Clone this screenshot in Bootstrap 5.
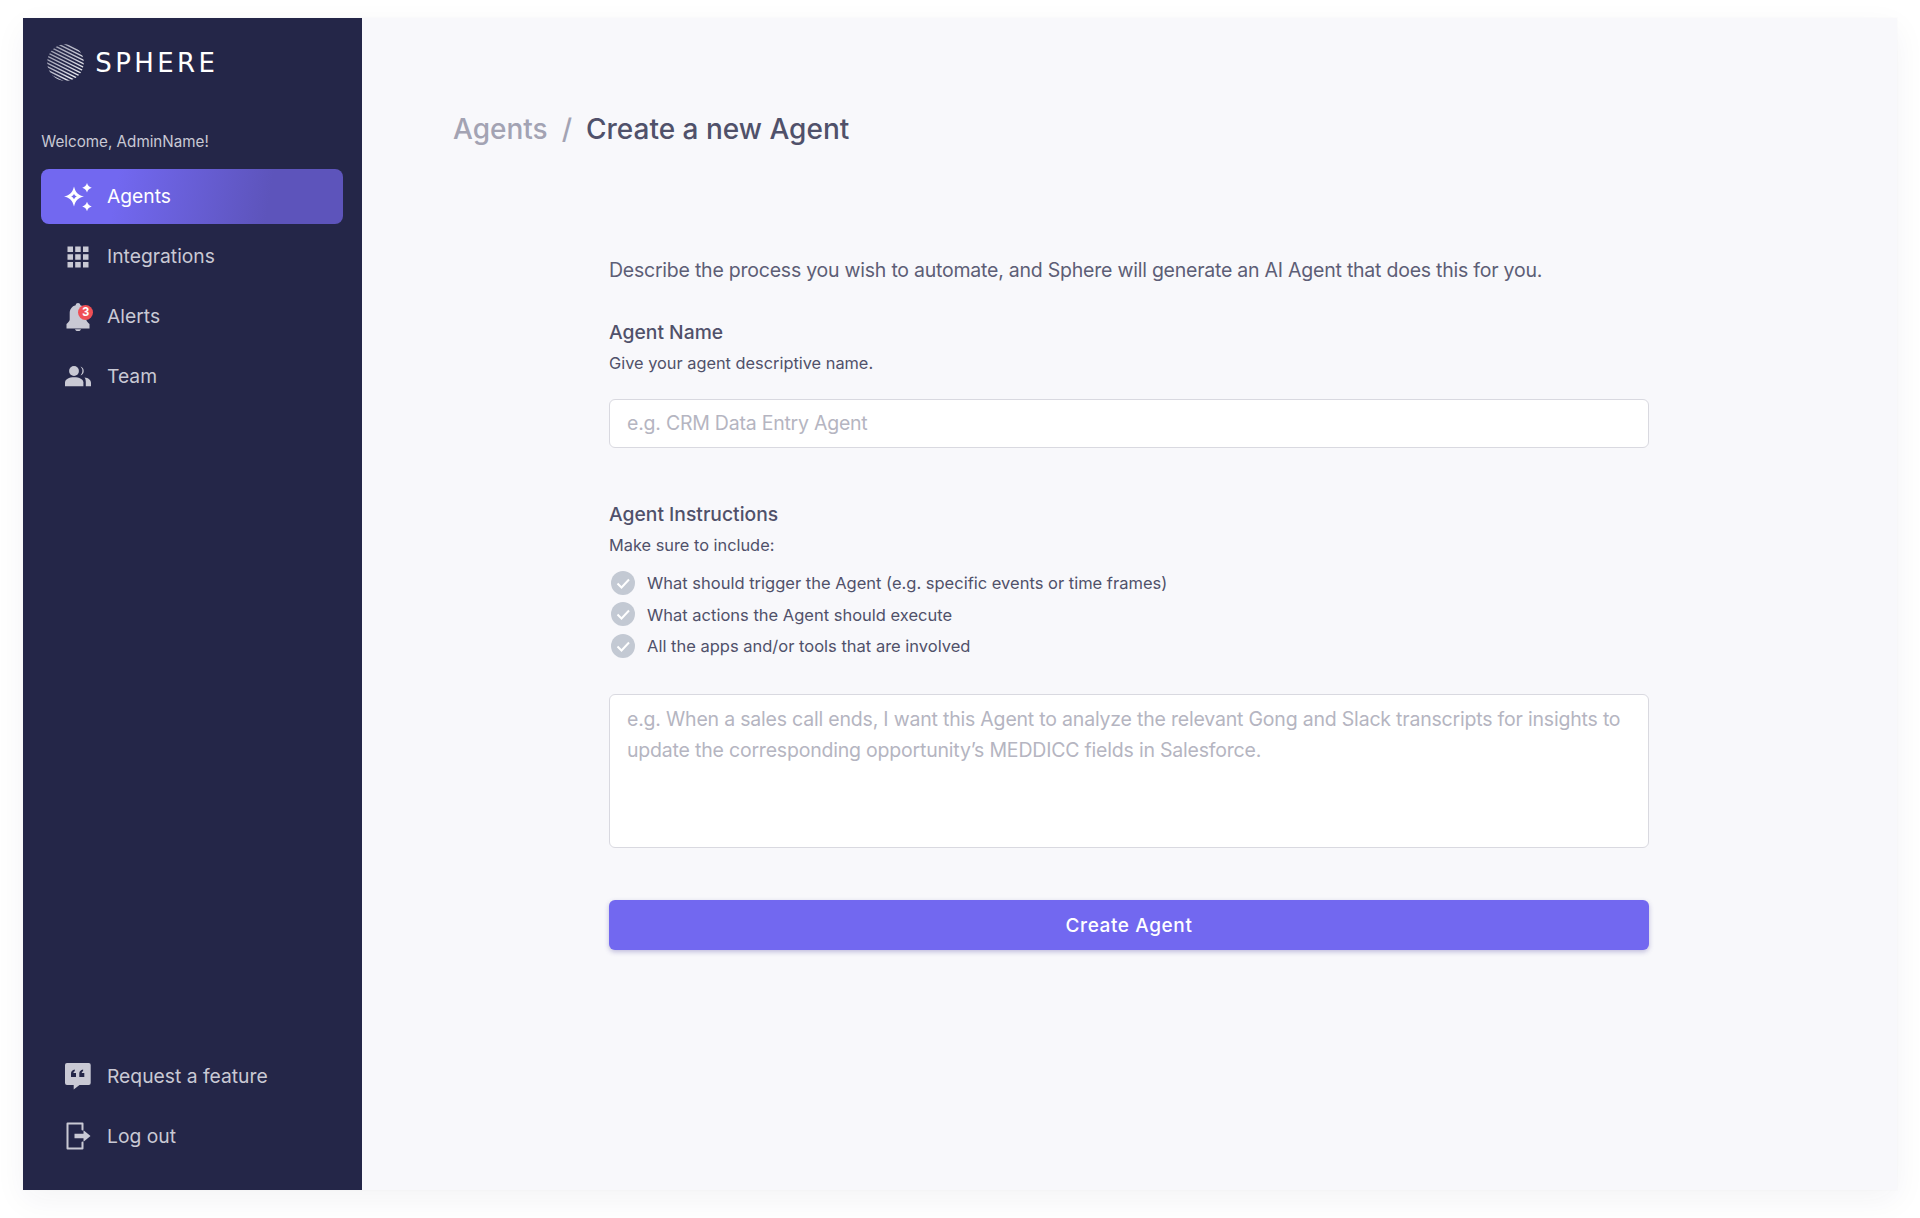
<!DOCTYPE html>
<html lang="en">
<head>
<meta charset="utf-8">
<title>Sphere</title>
<link href="https://cdn.jsdelivr.net/npm/bootstrap@5.3.0/dist/css/bootstrap.min.css" rel="stylesheet">
<style>
html,body{height:100%;}
body{background:#fff;font-family:"Inter","Liberation Sans",sans-serif;color:#50516a;overflow:hidden;}
.page-wrap{height:1218px;padding:18px 23px 28px 23px;}
.app-frame{height:1172px;box-shadow:0 0 0 1px rgba(60,60,100,.012),0 10px 30px rgba(40,40,80,.05);}
.side-panel{width:338.5px;background:#242648;padding:0 18.2px 26.5px 18.3px;flex:none;}
.brand-row{height:88px;padding:0 0 0 5.5px;gap:11.5px;}
.brand-name{font-family:"DejaVu Sans",sans-serif;font-weight:400;font-size:26px;line-height:1;letter-spacing:3.4px;color:#fff;position:relative;top:1px;}
.welcome-line{font-size:15.2px;line-height:20px;color:#c9c9d4;margin:26px 0 17px 0;}
.side-link{height:55px;padding-left:22.7px;gap:15px;color:#c9c9d4;font-size:19.3px;border-radius:8px;text-decoration:none;margin-bottom:5px;}
.side-link:last-child{margin-bottom:0;}
.side-link.is-on{background:linear-gradient(100deg,#7268f0 25%,#5d54bb 75%);color:#fff;}
.link-label{position:relative;top:.4px;}
.icon-slot{width:28px;height:28px;flex:none;position:relative;}
.icon-slot svg{display:block;width:28px;height:28px;}
.bell-count{position:absolute;left:14px;top:2px;width:15.500px;height:15.500px;border-radius:50%;background:#ef4f55;color:#fff;font-size:12.500px;font-weight:700;line-height:15.500px;text-align:center;font-family:"Liberation Sans",sans-serif;}
.main-pane{background:#f8f8fb;padding:91px 0 0 91.5px;border:0;}
.crumb-line{font-size:28px;line-height:40px;font-weight:500;color:#50516a;gap:14px;}
.crumb-first{color:#a3a3b3;}
.form-col{width:1040px;margin-left:156px;}
.lead-line{font-size:19.500px;letter-spacing:-.23px;line-height:30px;color:#5d5e76;margin-top:106px;}
.field-title{font-size:19.300px;line-height:26px;font-weight:500;color:#50516a;display:block;margin:34.4px 0 6.6px;}
.field-hint{font-size:16.350px;line-height:22px;color:#50516a;margin:0;}
.form-control.sphere-input{height:49px;margin-top:25px;font-size:19.500px;letter-spacing:-.23px;padding:0 17px;border:1.5px solid #d9d9e0;border-radius:6px;background:#fff;color:#50516a;}
.form-control.sphere-input::placeholder,.form-control.sphere-area::placeholder{color:#b5b5c1;opacity:1;}
.second-title{margin-top:53.4px;}
.check-list{margin:11px 0 0;padding:0;list-style:none;}
.check-list li{height:31.5px;gap:12px;font-size:16.500px;color:#50516a;padding-left:2px;}
.check-list li span{position:relative;top:1px;}
.check-list svg{width:24px;height:24px;flex:none;}
.form-control.sphere-area{height:154px;margin-top:33px;font-size:19.500px;letter-spacing:-.2px;line-height:31px;padding:9px 17px;border:1.5px solid #d9d9e0;border-radius:6px;background:#fff;resize:none;}
.btn.sphere-btn{height:50px;margin-top:52px;background:#7268f0;border:0;border-radius:6px;color:#fff;font-size:19px;letter-spacing:.6px;font-weight:500;padding-top:7px;box-shadow:0 2px 5px rgba(60,50,150,.3);}
</style>
</head>
<body>
<div class="page-wrap">
<div class="app-frame d-flex">
  <aside class="side-panel d-flex flex-column">
    <div class="brand-row d-flex align-items-center">
      <svg width="37" height="37" viewBox="0 0 37 37" aria-hidden="true">
        <defs>
          <clipPath id="ball"><circle cx="18.5" cy="18.5" r="18.300"/></clipPath>
          <linearGradient id="shine" gradientUnits="userSpaceOnUse" x1="0" y1="0" x2="37" y2="37"><stop offset="0" stop-color="#8d8ea3"/><stop offset=".55" stop-color="#c4c5d2"/><stop offset="1" stop-color="#ffffff"/></linearGradient>
        </defs>
        <g clip-path="url(#ball)" stroke="url(#shine)" stroke-width="1.500" fill="none">
          <path d="M-10 -31.500L50 -1.500M-10 -28L50 2M-10 -24.500L50 5.500M-10 -21L50 9M-10 -17.500L50 12.500M-10 -14L50 16M-10 -10.500L50 19.500M-10 -7L50 23M-10 -3.500L50 26.500M-10 0L50 30M-10 3.500L50 33.500M-10 7L50 37M-10 10.500L50 40.500M-10 14L50 44M-10 17.500L50 47.500M-10 21L50 51M-10 24.500L50 54.500M-10 28L50 58"/>
        </g>
      </svg>
      <span class="brand-name">SPHERE</span>
    </div>
    <div class="welcome-line">Welcome, AdminName!</div>
    <nav class="d-flex flex-column">
      <a class="side-link is-on d-flex align-items-center" href="#"><span class="icon-slot"><svg viewBox="0 0 28 28" fill="#fff"><path fill-rule="evenodd" d="M10 3.500C11.500 9.500 14 12 20 13.500 14 15 11.500 17.500 10 23.500 8.500 17.500 6 15 0 13.500 6 12 8.500 9.500 10 3.500ZM10 10.700C9.500 12 8.500 13 7.200 13.500 8.500 14 9.500 15 10 16.300 10.500 15 11.500 14 12.800 13.500 11.500 13 10.500 12 10 10.700Z"/><path d="M23 0C23.800 2.700 25.100 4 27.800 4.800 25.100 5.600 23.800 6.900 23 9.600 22.200 6.900 20.900 5.600 18.200 4.800 20.900 4 22.200 2.700 23 0Z"/><path d="M23 18.700C23.800 21.400 25.100 22.700 27.800 23.500 25.100 24.300 23.800 25.600 23 28.300 22.200 25.600 20.900 24.300 18.200 23.500 20.900 22.700 22.200 21.400 23 18.700Z"/></svg></span><span class="link-label">Agents</span></a>
      <a class="side-link d-flex align-items-center" href="#"><span class="icon-slot"><svg viewBox="0 0 28 28" fill="#c9c9d4"><path d="M3.500 3.500h5.500v5.500h-5.500zM11.200 3.500h5.500v5.500h-5.500zM19 3.500h5.500v5.500h-5.500zM3.500 11.200h5.500v5.500h-5.500zM11.200 11.200h5.500v5.500h-5.500zM19 11.200h5.500v5.500h-5.500zM3.500 19h5.500v5.500h-5.500zM11.200 19h5.500v5.500h-5.500zM19 19h5.500v5.500h-5.500z"/></svg></span><span class="link-label">Integrations</span></a>
      <a class="side-link d-flex align-items-center" href="#"><span class="icon-slot"><svg viewBox="0 0 28 28" fill="#c9c9d4"><path d="M14 0c1.300 0 2.200.9 2.300 2.200 3.900 1 6 4 6 8v6.300c0 1.500 1.700 3 3.200 4.500v4.500H2.500V21c1.500-1.500 3.200-3 3.200-4.500v-6.300c0-4 2.100-7 6-8C11.800.9 12.700 0 14 0z"/><path d="M11 26.300h6c-.3 1.100-1.500 1.900-3 1.900s-2.700-.8-3-1.900z"/></svg><span class="bell-count">3</span></span><span class="link-label">Alerts</span></a>
      <a class="side-link d-flex align-items-center" href="#"><span class="icon-slot"><svg viewBox="0 0 28 28" fill="#c9c9d4"><circle cx="10" cy="8" r="4.900"/><path d="M1 23.200v-3.700c0-3.300 4-5.300 9.200-5.300s9.200 2 9.200 5.300v3.700z"/><path d="M16.500 3.400a4.900 4.900 0 0 1 0 9.200 6.500 6.500 0 0 0 0-9.200z"/><path d="M20.500 14.500c3.800.5 6.500 2.300 6.500 5.300v3.400h-5.200v-3.400c0-2.200-.2-3.900-1.300-5.300z"/></svg></span><span class="link-label">Team</span></a>
    </nav>
    <nav class="d-flex flex-column mt-auto">
      <a class="side-link d-flex align-items-center" href="#"><span class="icon-slot"><svg viewBox="0 0 28 28"><path fill="#c9c9d4" d="M3 1h21.700a2 2 0 0 1 2 2v18a2 2 0 0 1-2 2H15.500l-5.800 4.500V23H3a2 2 0 0 1-2-2V3a2 2 0 0 1 2-2z"/><path fill="#242648" d="M7 15V11.500C7 9.500 8.300 8 10.800 7.500v1.800c-.8.200-1.300.8-1.300 1.600h2.500V15zM15.300 15V11.500c0-2 1.300-3.500 3.800-4v1.800c-.8.200-1.300.8-1.300 1.600h2.500V15z"/></svg></span><span class="link-label">Request a feature</span></a>
      <a class="side-link d-flex align-items-center" href="#"><span class="icon-slot"><svg viewBox="0 0 28 28"><path fill="none" stroke="#c9c9d4" stroke-width="2" stroke-linejoin="round" stroke-linecap="round" d="M18.500 7.500V1.500H3.500v25h15v-6"/><path fill="#c9c9d4" d="M10.500 11.800h9V8.300L26.500 14l-7 5.700v-3.500h-9z"/></svg></span><span class="link-label">Log out</span></a>
    </nav>
  </aside>
  <main class="main-pane flex-grow-1">
    <div class="crumb-line d-flex"><span class="crumb-first">Agents</span><span class="crumb-first">/</span><span>Create a new Agent</span></div>
    <form class="form-col d-flex flex-column">
      <p class="lead-line mb-0">Describe the process you wish to automate, and Sphere will generate an AI Agent that does this for you.</p>
      <label class="field-title" for="agent-name">Agent Name</label>
      <p class="field-hint">Give your agent descriptive name.</p>
      <input id="agent-name" class="form-control sphere-input" type="text" placeholder="e.g. CRM Data Entry Agent">
      <label class="field-title second-title" for="agent-text">Agent Instructions</label>
      <p class="field-hint">Make sure to include:</p>
      <ul class="check-list">
        <li class="d-flex align-items-center"><svg viewBox="0 0 24 24"><circle cx="12" cy="12" r="12" fill="#c3c9d3"/><path d="M6.500 12.500l4 4 7.500-8" fill="none" stroke="#fff" stroke-width="2"/></svg><span>What should trigger the Agent (e.g. specific events or time frames)</span></li>
        <li class="d-flex align-items-center"><svg viewBox="0 0 24 24"><circle cx="12" cy="12" r="12" fill="#c3c9d3"/><path d="M6.500 12.500l4 4 7.500-8" fill="none" stroke="#fff" stroke-width="2"/></svg><span>What actions the Agent should execute</span></li>
        <li class="d-flex align-items-center"><svg viewBox="0 0 24 24"><circle cx="12" cy="12" r="12" fill="#c3c9d3"/><path d="M6.500 12.500l4 4 7.500-8" fill="none" stroke="#fff" stroke-width="2"/></svg><span>All the apps and/or tools that are involved</span></li>
      </ul>
      <textarea id="agent-text" class="form-control sphere-area" placeholder="e.g. When a sales call ends, I want this Agent to analyze the relevant Gong and Slack transcripts for insights to update the corresponding opportunity’s MEDDICC fields in Salesforce."></textarea>
      <button type="button" class="btn sphere-btn w-100">Create Agent</button>
    </form>
  </main>
</div>
</div>
<script src="https://cdn.jsdelivr.net/npm/bootstrap@5.3.0/dist/js/bootstrap.bundle.min.js"></script>
</body>
</html>
